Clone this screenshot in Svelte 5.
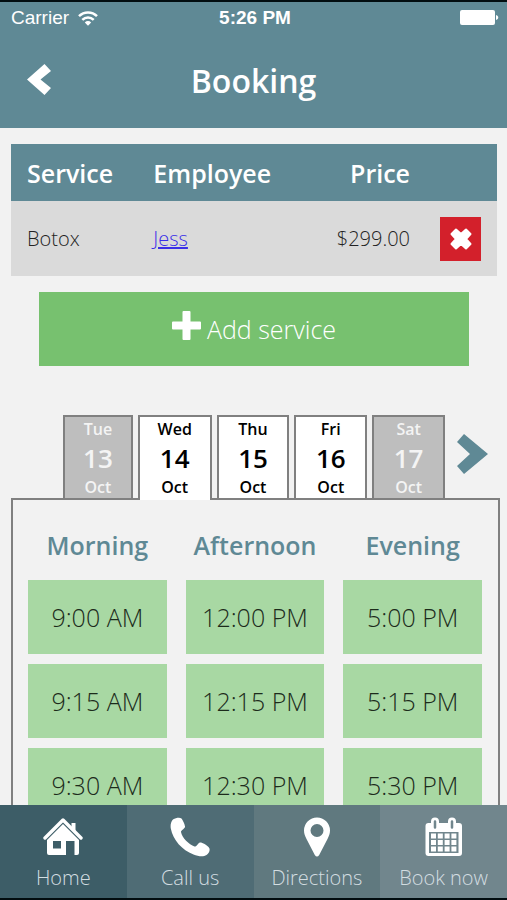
<script lang="ts">
    interface Day {
        weekday: string;
        date: number;
        month: string;
        disabled?: boolean;
    }

    const days: Day[] = [
        { weekday: "Tue", date: 13, month: "Oct", disabled: true },
        { weekday: "Wed", date: 14, month: "Oct" },
        { weekday: "Thu", date: 15, month: "Oct" },
        { weekday: "Fri", date: 16, month: "Oct" },
        { weekday: "Sat", date: 17, month: "Oct", disabled: true },
    ];

    const periods = [
        { name: "Morning", slots: ["9:00 AM", "9:15 AM", "9:30 AM"] },
        { name: "Afternoon", slots: ["12:00 PM", "12:15 PM", "12:30 PM"] },
        { name: "Evening", slots: ["5:00 PM", "5:15 PM", "5:30 PM"] },
    ];

    let services = $state([{ name: "Botox", employee: "Jess", price: 299 }]);
    let selected = $state(14);

    function removeService(index: number) {
        services.splice(index, 1);
    }
</script>

<div class="app">
    <header>
        <div class="status">
            <span class="carrier">
                Carrier
                <svg width="20" height="15" viewBox="0 0 20 15" aria-hidden="true">
                    <g fill="none" stroke="#fff" stroke-width="2.5">
                        <path d="M1 5.2C6 .2 14 .2 19 5.2" />
                        <path d="M4.3 8.8c3.3-3.2 8.1-3.2 11.4 0" />
                    </g>
                    <path d="M6.8 11.4c1.9-1.8 4.5-1.8 6.4 0L10 14.8z" fill="#fff" />
                </svg>
            </span>
            <time>5:26 PM</time>
            <span class="battery">
                <svg width="40" height="16" viewBox="0 0 40 16" aria-label="Battery full" role="img">
                    <rect x="1" width="35" height="15" rx="2" fill="#fff" />
                    <path d="M37 5c3 1 3 4 0 5z" fill="#fff" />
                </svg>
            </span>
        </div>
        <div class="title-bar">
            <button class="back" aria-label="Back">
                <svg width="24" height="31" viewBox="0 0 24 31">
                    <path d="M17.500 0 24 7 13.500 15.500 24 24 17.500 31 0 15.500z" fill="#fff" />
                </svg>
            </button>
            <h1>Booking</h1>
        </div>
    </header>

    <main>
        <table>
            <thead>
                <tr>
                    <th class="service">Service</th>
                    <th>Employee</th>
                    <th class="price">Price</th>
                    <th class="action"></th>
                </tr>
            </thead>
            <tbody>
                {#each services as service, i}
                    <tr>
                        <td>{service.name}</td>
                        <td><a href="#employee">{service.employee}</a></td>
                        <td class="price">${service.price.toFixed(2)}</td>
                        <td class="action">
                            <button class="remove" aria-label="Remove {service.name}" onclick={() => removeService(i)}>
                                <svg width="22" height="22" viewBox="0 0 22 22">
                                    <path
                                        d="M6 1.500 11 6 16 1.500 20.500 6 16 11 20.500 16 16 20.500 11 16 6 20.500 1.500 16 6 11 1.500 6z"
                                        fill="#fff"
                                        stroke="#fff"
                                        stroke-width="2"
                                        stroke-linejoin="round"
                                    />
                                </svg>
                            </button>
                        </td>
                    </tr>
                {/each}
            </tbody>
        </table>

        <button class="add">
            <svg width="29" height="29" viewBox="0 0 29 29" aria-hidden="true">
                <path
                    d="M11.500 1h6v10.500H28v6H17.500V28h-6V17.500H1v-6h10.500z"
                    fill="#fff"
                    stroke="#fff"
                    stroke-width="2"
                    stroke-linejoin="round"
                />
            </svg>
            Add service
        </button>

        <div class="day-row">
            <div class="days">
                {#each days as day}
                    <button
                        class="day"
                        class:active={selected === day.date}
                        disabled={day.disabled}
                        onclick={() => (selected = day.date)}
                    >
                        <span>{day.weekday}</span>
                        <strong>{day.date}</strong>
                        <span>{day.month}</span>
                    </button>
                {/each}
            </div>
            <button class="next" aria-label="Next days">
                <svg width="31" height="40" viewBox="0 0 31 40">
                    <path d="M7 0 31 20 7 40 0 32l13-12L0 8z" fill="#5f8995" />
                </svg>
            </button>
        </div>

        <section class="panel">
            {#each periods as period}
                <div class="period">
                    <h2>{period.name}</h2>
                    {#each period.slots as slot}
                        <button class="slot">{slot}</button>
                    {/each}
                </div>
            {/each}
        </section>
    </main>

    <nav>
        <a href="#home">
            <svg width="40" height="40" viewBox="0 0 40 40">
                <path d="M2 21 20 3l18 18" fill="none" stroke="#fff" stroke-width="3.4" stroke-linecap="round" stroke-linejoin="round" />
                <path d="M28.500 6h4V16l-4-4z" fill="#fff" />
                <path
                    d="M20 7 36 23V36q0 2-2 2h-2.500V24H23v14H6q-2 0-2-2V23zM10 24v7.500h8V24z"
                    fill="#fff"
                    fill-rule="evenodd"
                />
            </svg>
            Home
        </a>
        <a href="#call">
            <svg width="40" height="40" viewBox="0 0 40 40">
                <path
                    d="M3 2.500C6 .5 10 0 11.500 1.500c1.500 2 3 5 3.500 8 .3 2-4 3.500-4 5.500 1 6 8 12.500 13.500 14.500 2 .5 3.500-3.500 5.500-4 3 0 6.500 2.500 8.500 4.500 2.500 2.500.5 6-2 8-3 2-8 1.500-13-.5C12 33 3 23 .8 11.500.2 8 1 4.500 3 2.500z"
                    fill="#fff"
                />
            </svg>
            Call us
        </a>
        <a href="#directions">
            <svg width="40" height="40" viewBox="0 0 40 40">
                <path
                    d="M20 .5A13 13 0 0 0 7 13.500c0 3 1 5.500 2.500 8.500l8.300 16q2.200 3 4.400 0l8.300-16c1.500-3 2.500-5.500 2.500-8.500A13 13 0 0 0 20 .5zm0 6.500a6.500 6.500 0 1 1 0 13 6.500 6.500 0 0 1 0-13z"
                    fill="#fff"
                    fill-rule="evenodd"
                />
            </svg>
            Directions
        </a>
        <a href="#book">
            <svg width="40" height="40" viewBox="0 0 40 40">
                <path
                    d="M4.500 6H7V4.500a4 4 0 0 1 8 0V6h9V4.500a4 4 0 0 1 8 0V6h3q3 0 3 3v27q0 3-3 3H4.500q-3 0-3-3V9q0-3 3-3zm.5 9v21h29.500V15z"
                    fill="#fff"
                    fill-rule="evenodd"
                />
                <path d="M11 4.500v6M28 4.500v6" stroke="#71868d" stroke-width="2.5" stroke-linecap="round" />
                <path
                    d="M7 16.500h5v5H7zm6.800 0h5v5h-5zm6.800 0h5v5h-5zm6.800 0h5v5h-5zM7 23h5v5H7zm6.800 0h5v5h-5zm6.800 0h5v5h-5zm6.800 0h5v5h-5zM7 29.500h5v5H7zm6.800 0h5v5h-5zm6.800 0h5v5h-5zm6.800 0h5v5h-5z"
                    fill="#fff"
                />
            </svg>
            Book now
        </a>
    </nav>
</div>

<style>
    .app {
        box-sizing: border-box;
        height: 100vh;
        display: flex;
        flex-direction: column;
        border: solid #020d10;
        border-width: 2px 0;
        background: #f2f2f2;
        color: #222;
        font-family: "Open Sans", sans-serif;
        font-weight: 300;
        overflow: hidden;
    }

    button {
        margin: 0;
        padding: 0;
        border: 0;
        background: none;
        color: inherit;
        font: inherit;
        cursor: pointer;
    }

    svg {
        display: block;
        flex: none;
    }

    header {
        flex: none;
        background: #5f8995;
        color: #fff;
    }

    .status {
        display: grid;
        grid-template-columns: 1fr auto 1fr;
        align-items: center;
        height: 32px;
        padding: 0 8px 0 11px;
        font: 400 19px/32px "Liberation Sans", sans-serif;
    }

    .carrier {
        display: flex;
        align-items: center;
        gap: 9px;
    }

    .status time {
        font-weight: 700;
    }

    .battery {
        display: flex;
        justify-content: flex-end;
    }

    .title-bar {
        display: grid;
        grid-template-columns: 52px 1fr 52px;
        align-items: center;
        height: 94px;
        padding: 0 27px;
        box-sizing: border-box;
    }

    .back {
        padding-bottom: 4px;
    }

    h1 {
        margin: 0;
        font-size: 32px;
        font-weight: 600;
        line-height: 40px;
        text-align: center;
    }

    main {
        flex: 1;
        min-height: 0;
        padding: 16px 7px 0 11px;
        overflow: hidden;
    }

    table {
        width: calc(100% - 3px);
        border-collapse: collapse;
        table-layout: fixed;
        background: #dadada;
    }

    thead {
        background: #5f8995;
        color: #fff;
    }

    th {
        height: 57px;
        padding: 0 0 0 16px;
        font-size: 25px;
        font-weight: 600;
        text-align: left;
        box-sizing: border-box;
    }

    td {
        height: 75px;
        padding: 0 0 0 16px;
        font-size: 20px;
        box-sizing: border-box;
    }

    .service {
        width: 26%;
    }

    .price {
        padding-left: 0;
        text-align: right;
    }

    .action {
        width: 87px;
        padding: 0 16px 0 0;
    }

    td a {
        color: #3a2fe8;
    }

    .remove {
        display: grid;
        place-items: center;
        width: 41px;
        height: 44px;
        margin-left: auto;
        background: #d3202b;
    }

    .add {
        display: flex;
        align-items: center;
        justify-content: center;
        gap: 6px;
        width: calc(100% - 59px);
        height: 74px;
        margin: 16px 0 0 28px;
        background: #77c16f;
        color: #fff;
        font-size: 25px;
    }

    .add svg {
        margin-bottom: 8px;
    }

    .day-row {
        display: flex;
        align-items: center;
        gap: 12px;
        margin-top: 49px;
        padding: 0 12px 0 52px;
    }

    .days {
        flex: 1;
        display: grid;
        grid-template-columns: 70fr 74fr 73fr 73fr 73fr;
        gap: 5px;
    }

    .day {
        display: flex;
        flex-direction: column;
        align-items: center;
        height: 83px;
        border: 2px solid #808080;
        border-bottom: 0;
        background: #fff;
        color: #000;
        font-size: 16px;
        font-weight: 600;
        line-height: 24px;
    }

    .day strong {
        font-size: 26px;
        font-weight: 600;
        line-height: 34px;
    }

    .day:disabled {
        background: #bebebe;
        color: #f4f4f4;
    }

    /* cover the panel's top border */
    .day.active {
        height: 85px;
        margin-bottom: -2px;
        position: relative;
    }

    .next {
        padding-bottom: 6px;
    }

    .panel {
        display: grid;
        grid-template-columns: repeat(3, 1fr);
        gap: 19px;
        padding: 24px 16px 24px 15px;
        border: 2px solid #808080;
    }

    .period {
        display: flex;
        flex-direction: column;
        gap: 10px;
    }

    h2 {
        margin: 0 0 4px;
        color: #5f8995;
        font-size: 25px;
        font-weight: 600;
        line-height: 42px;
        text-align: center;
    }

    .slot {
        height: 74px;
        background: #a8d8a3;
        color: #1c2b1b;
        font-size: 25px;
    }

    nav {
        flex: none;
        display: grid;
        grid-template-columns: repeat(4, 1fr);
        height: 93px;
    }

    nav a {
        display: flex;
        flex-direction: column;
        align-items: center;
        gap: 6px;
        padding-top: 12px;
        background: #3d5d67;
        color: #d3dde1;
        font-size: 20px;
        line-height: 30px;
        text-decoration: none;
    }

    nav a:nth-child(2) {
        background: #4f6c75;
    }

    nav a:nth-child(3) {
        background: #60797f;
    }

    nav a:nth-child(4) {
        background: #71868d;
    }
</style>
